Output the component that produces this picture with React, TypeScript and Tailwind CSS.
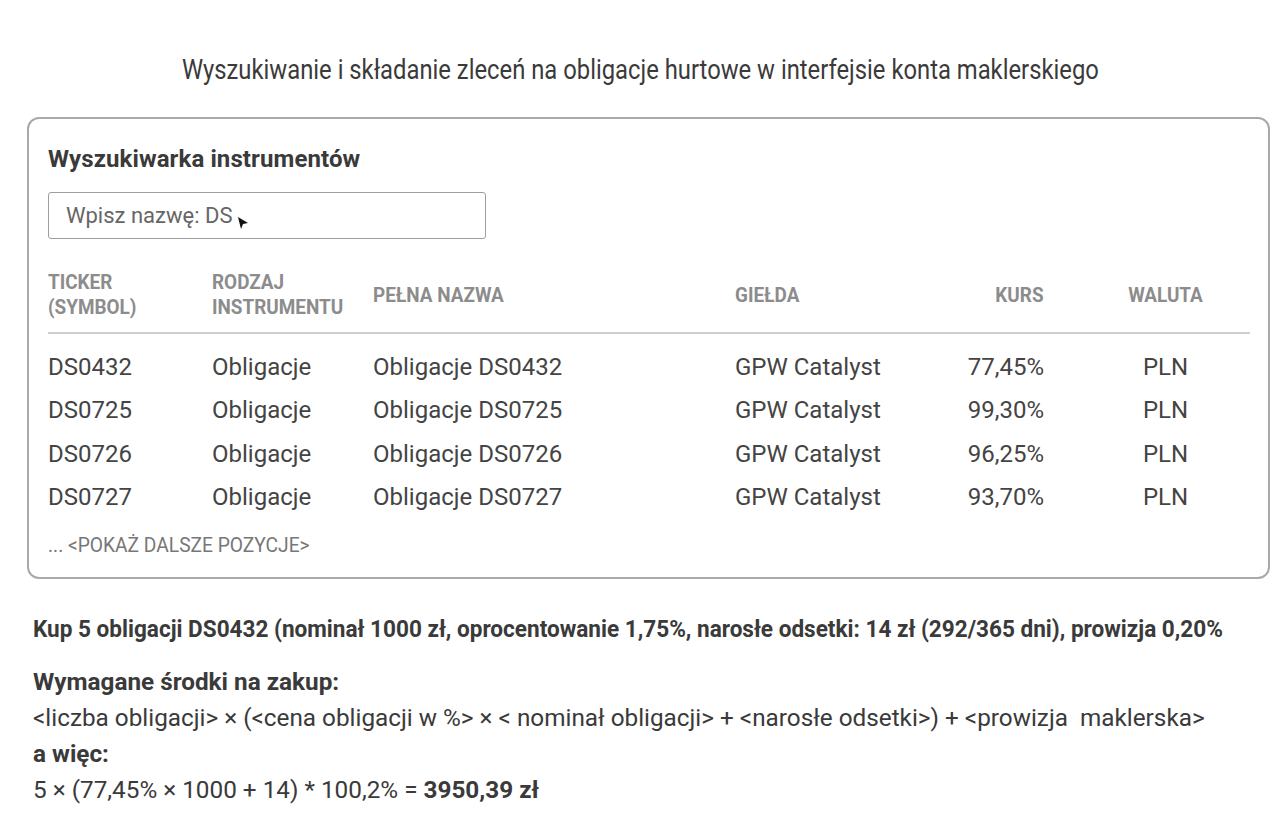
import React from 'react';

const rows = [
  { ticker: 'DS0432', kurs: '77,45%' },
  { ticker: 'DS0725', kurs: '99,30%' },
  { ticker: 'DS0726', kurs: '96,25%' },
  { ticker: 'DS0727', kurs: '93,70%' },
];

const font = "font-['Roboto',sans-serif]";

function Cursor() {
  return (
    <svg width="12" height="14" viewBox="0 0 12 14" className="ml-[5px] mt-[14px] inline-block">
      <path d="M1 1 L11 7 L6 8 L4 13 Z" fill="#111" />
    </svg>
  );
}

export default function App() {
  return (
    <div className={`w-[1280px] h-[833px] bg-white text-[#3b3b3b] ${font}`}>
      {/* title */}
      <div className="h-[117px] pt-[53px] flex justify-center">
        <div className="text-[28px] leading-[34px] text-[#3a3a3a] whitespace-nowrap scale-x-[0.85] origin-center">
          Wyszukiwanie i składanie zleceń na obligacje hurtowe w interfejsie konta maklerskiego
        </div>
      </div>

      {/* card */}
      <div className="ml-[27px] w-[1243px] border-2 border-[#a9a9a9] rounded-[12px] pt-[26px] pb-[20px] pl-[19px] pr-[18px]">
        <h2 className="text-[24px] leading-[28px] font-bold text-[#3a3a3a] tracking-[0.1px]">Wyszukiwarka instrumentów</h2>
        <div className="mt-[19px] w-[438px] h-[47px] border border-[#9e9e9e] rounded-[3px] flex items-center pl-[17px] text-[22px] text-[#666]">
          <span>Wpisz nazwę: DS</span>
          <Cursor />
        </div>

        <div className="mt-[31px] grid grid-cols-[164px_161px_362px_195px_114px_205px] items-center pb-[12px] border-b-2 border-[#cfcfcf] text-[21px] leading-[25px] font-bold text-[#8c8c8c] uppercase">
          <div className="origin-left scale-x-[0.9] whitespace-nowrap">Ticker<br />(Symbol)</div>
          <div className="origin-left scale-x-[0.9] whitespace-nowrap">Rodzaj<br />Instrumentu</div>
          <div className="origin-left scale-x-[0.9] whitespace-nowrap">Pełna nazwa</div>
          <div className="origin-left scale-x-[0.9] whitespace-nowrap">Giełda</div>
          <div className="text-right"><span className="inline-block origin-right scale-x-[0.9]">Kurs</span></div>
          <div className="pl-[38px] text-center"><span className="inline-block scale-x-[0.9]">Waluta</span></div>
        </div>

        <div className="pt-[11px]">
          {rows.map((r) => (
            <div key={r.ticker} className="grid grid-cols-[164px_161px_362px_195px_114px_205px] h-[43.5px] items-center text-[24px] text-[#444]">
              <div>{r.ticker}</div>
              <div>Obligacje</div>
              <div>Obligacje {r.ticker}</div>
              <div>GPW Catalyst</div>
              <div className="text-right">{r.kurs}</div>
              <div className="pl-[38px] text-center">PLN</div>
            </div>
          ))}
        </div>

        <div className="mt-[14px] text-[20px] leading-[24px] text-[#777] origin-left scale-x-[0.96] whitespace-nowrap">
          ... &lt;POKAŻ DALSZE POZYCJE&gt;
        </div>
      </div>

      {/* calculation */}
      <div className="pl-[33px] pt-[35px]">
        <p className="text-[24px] leading-[30px] font-bold text-[#3a3a3a] origin-left scale-x-[0.94] whitespace-nowrap">
          Kup 5 obligacji DS0432 (nominał 1000 zł, oprocentowanie 1,75%, narosłe odsetki: 14 zł (292/365 dni), prowizja 0,20%
        </p>
        <div className="mt-[20px] text-[24.3px] leading-[36px] text-[#3a3a3a] whitespace-nowrap">
          <p className="font-bold">Wymagane środki na zakup:</p>
          <p>&lt;liczba obligacji&gt; × (&lt;cena obligacji w %&gt; × &lt; nominał obligacji&gt; + &lt;narosłe odsetki&gt;) + &lt;prowizja&nbsp; maklerska&gt;</p>
          <p className="font-bold">a więc:</p>
          <p>
            5 × (77,45% × 1000 + 14) * 100,2% = <span className="font-bold">3950,39 zł</span>
          </p>
        </div>
      </div>
    </div>
  );
}
